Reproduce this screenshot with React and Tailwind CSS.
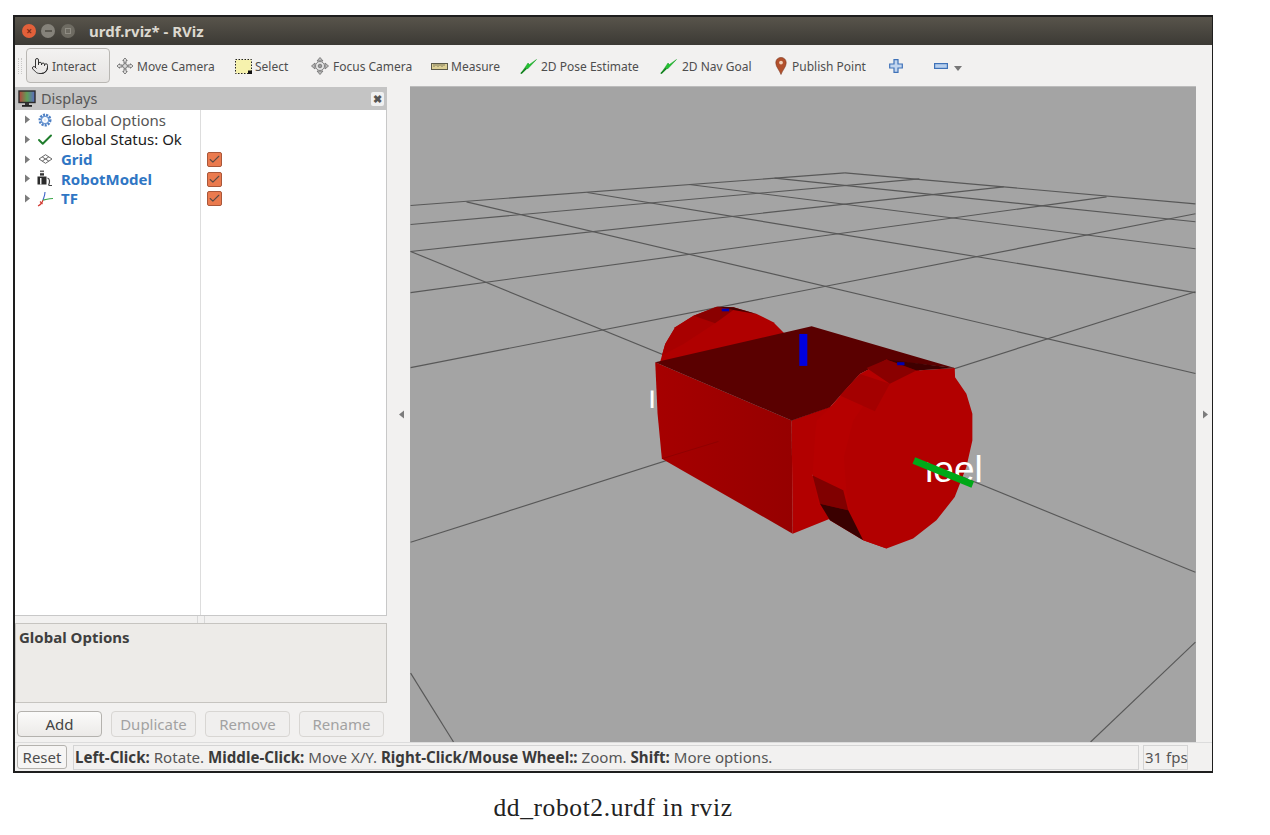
import React from "react";
import { Pointer, Check } from "lucide-react";

const sans = "font-['Noto_Sans',sans-serif]";

const Tri = ({ dir = "right", className = "" }) => (
  <svg width="7" height="9" viewBox="0 0 7 9" className={className}>
    <path d={dir === "right" ? "M1 0.5L6 4.5L1 8.5Z" : "M6 0.5L1 4.5L6 8.5Z"} fill="#7c7c7c" />
  </svg>
);

const MoveIcon = () => (
  <svg width="18" height="18" viewBox="0 0 18 18" fill="none" stroke="#6a6a6a" strokeWidth="0.9">
    <path d="M9 1L6.8 3.6H8V6H10V3.6H11.2Z" />
    <path d="M9 17L6.8 14.4H8V12H10V14.4H11.2Z" />
    <path d="M1 9L3.6 6.8V8H6V10H3.6V11.2Z" />
    <path d="M17 9L14.4 6.8V8H12V10H14.4V11.2Z" />
    <circle cx="9" cy="9" r="2.4" fill="#d8d8d8" />
  </svg>
);

const SelectIcon = () => (
  <svg width="17" height="15" viewBox="0 0 17 15">
    <rect x="0.5" y="0.5" width="16" height="14" fill="#f6f2ad" stroke="#222" strokeDasharray="1.5 1.5" />
    <rect x="13" y="11.5" width="4" height="3.5" fill="#111" />
  </svg>
);

const FocusIcon = () => (
  <svg width="18" height="18" viewBox="0 0 18 18" fill="none" stroke="#777" strokeWidth="0.9">
    <path d="M9 0.5L12 4H6Z" fill="#bbb" />
    <path d="M9 17.5L12 14H6Z" fill="#bbb" />
    <path d="M0.5 9L4 6V12Z" fill="#bbb" />
    <path d="M17.5 9L14 6V12Z" fill="#bbb" />
    <circle cx="9" cy="9" r="4.5" fill="#e4e4e4" />
    <circle cx="9" cy="9" r="1.8" fill="#999" />
  </svg>
);

const RulerIcon = () => (
  <svg width="17" height="7" viewBox="0 0 17 7">
    <rect x="0.5" y="0.5" width="16" height="6" fill="#dccf94" stroke="#5c5a48" />
    <path d="M3 1V4M5 1V3M7 1V4M9 1V3M11 1V4M13 1V3" stroke="#5c5a48" strokeWidth="0.7" />
  </svg>
);

const ArrowIcon = () => (
  <svg width="17" height="15" viewBox="0 0 17 15">
    <path d="M1 14.5L6 8.5L7.5 10L16.5 0.5L9.5 5.5L8 4Z" fill="#21c42f" stroke="#1b9a28" strokeWidth="0.5" />
    <path d="M1 14.5L6.5 9.2" stroke="#12801e" strokeWidth="1.6" />
  </svg>
);

const PinIcon = () => (
  <svg width="12" height="18" viewBox="0 0 12 18">
    <path d="M6 0.5C2.8 0.5 0.8 2.8 0.8 5.8C0.8 9.8 4.6 13.5 6 17.5C7.4 13.5 11.2 9.8 11.2 5.8C11.2 2.8 9.2 0.5 6 0.5Z" fill="#b2502c" stroke="#7d3a22" strokeWidth="0.6" />
    <circle cx="6" cy="5.6" r="1.9" fill="#f0d0b8" />
  </svg>
);

const PlusIcon = () => (
  <svg width="14" height="14" viewBox="0 0 14 14">
    <path d="M5 0.7H9V5H13.3V9H9V13.3H5V9H0.7V5H5Z" fill="#c3d6ef" stroke="#3f72b8" strokeWidth="1.2" />
  </svg>
);

const MinusIcon = () => (
  <svg width="14" height="6" viewBox="0 0 14 6">
    <rect x="0.6" y="0.6" width="12.8" height="4.8" fill="#b8d0ee" stroke="#3f72b8" strokeWidth="1.2" />
  </svg>
);

const MonitorIcon = () => (
  <svg width="18" height="18" viewBox="0 0 18 18">
    <defs>
      <linearGradient id="scr" x1="0" x2="1" y1="0" y2="0">
        <stop offset="0" stopColor="#b8403c" />
        <stop offset="0.5" stopColor="#5f9f58" />
        <stop offset="1" stopColor="#5b6ac4" />
      </linearGradient>
    </defs>
    <rect x="1" y="1" width="16" height="11.5" fill="url(#scr)" stroke="#2b2b2b" strokeWidth="1.4" />
    <rect x="7" y="13" width="4" height="2" fill="#333" />
    <rect x="4" y="15" width="10" height="1.8" fill="#222" />
  </svg>
);

const GearIcon = () => (
  <svg width="14" height="14" viewBox="0 0 14 14">
    <circle cx="7" cy="7" r="5" fill="none" stroke="#4e80c4" strokeWidth="3" strokeDasharray="2 1" />
    <circle cx="7" cy="7" r="3.6" fill="none" stroke="#6f9ad4" strokeWidth="1.2" />
    <circle cx="7" cy="7" r="1.4" fill="#dfe9f6" />
  </svg>
);

const GridIcon = () => (
  <svg width="15" height="10" viewBox="0 0 15 10" fill="none" stroke="#666" strokeWidth="1">
    <path d="M7.5 0.7L14 5L7.5 9.3L1 5Z" />
    <path d="M4.2 2.9L10.8 7.1M10.8 2.9L4.2 7.1" />
  </svg>
);

const RobotIcon = () => (
  <svg width="16" height="17" viewBox="0 0 16 17">
    <rect x="3" y="0.5" width="4" height="1.6" fill="#666" />
    <rect x="3" y="3.2" width="4" height="2.4" fill="#333" />
    <rect x="0.5" y="6.5" width="9" height="8" fill="#2b2b2b" />
    <rect x="3" y="8" width="1.5" height="6.5" fill="#eee" />
    <path d="M10.5 8C13 9 13 12 11.5 15.5M12 15.5H15" stroke="#444" strokeWidth="1.2" fill="none" />
  </svg>
);

const TfIcon = () => (
  <svg width="17" height="16" viewBox="0 0 17 16" fill="none" strokeWidth="1.1">
    <path d="M6 9C5.5 11 4 13.5 1 15" stroke="#d23a32" />
    <path d="M6 9C7 6 8 4 8 1" stroke="#3d63c8" />
    <path d="M6 9C8 9 11 7.5 16 7.5" stroke="#3aa648" />
    <path d="M3 10.5L5.5 13" stroke="#d23a32" />
  </svg>
);

const CheckBox = () => (
  <div className="w-[15px] h-[15px] bg-[#ea7a4e] border border-[#a9573a] rounded-[2px] flex items-center justify-center">
    <Check size={13} strokeWidth={2} color="#5a4a44" />
  </div>
);

const rows = [
  { label: "Global Options", icon: <GearIcon />, cls: "text-[#555555]" },
  { label: "Global Status: Ok", icon: <Check size={18} strokeWidth={2.6} color="#1f7d2c" />, cls: "text-[#1c1c1c]" },
  { label: "Grid", icon: <GridIcon />, cls: "text-[#2f76c4] font-bold", box: true },
  { label: "RobotModel", icon: <RobotIcon />, cls: "text-[#2f76c4] font-bold", box: true },
  { label: "TF", icon: <TfIcon />, cls: "text-[#2f76c4] font-bold", box: true },
];

const tools = [
  { label: "Move Camera", icon: <MoveIcon />, w: "w-[119px]", gap: "gap-[3px]" },
  { label: "Select", icon: <SelectIcon />, w: "w-[76px]", gap: "gap-[3px]" },
  { label: "Focus Camera", icon: <FocusIcon />, w: "w-[120px]", gap: "gap-[4px]" },
  { label: "Measure", icon: <RulerIcon />, w: "w-[89px]", gap: "gap-[3px]" },
  { label: "2D Pose Estimate", icon: <ArrowIcon />, w: "w-[140px]", gap: "gap-[4px]" },
  { label: "2D Nav Goal", icon: <ArrowIcon />, w: "w-[115px]", gap: "gap-[5px]" },
  { label: "Publish Point", icon: <PinIcon />, w: "w-[114px]", gap: "gap-[5px]" },
];

const gridLines = [
  [410, 204.7, 845, 172],
  [845, 172, 1196, 203],
  [774.5, 177.3, 1196, 221],
  [689, 183.7, 1196, 248],
  [587, 191.7, 1196, 292],
  [466, 201, 1196, 373],
  [410, 250.7, 1196, 572],
  [410, 673, 453, 742],
  [410, 223.7, 919.5, 178],
  [410, 250.7, 1004, 186],
  [410, 292, 1107, 196],
  [410, 367, 1196, 213],
  [410, 542, 1196, 291],
  [1091, 742, 1196, 642],
];

const Scene = () => (
  <svg className="w-full h-full block" viewBox="410 86 786 656">
    <defs>
      <linearGradient id="faceL" x1="0" x2="1" y1="0" y2="0">
        <stop offset="0" stopColor="#a60000" />
        <stop offset="1" stopColor="#960000" />
      </linearGradient>
      <clipPath id="eel">
        <rect x="923" y="440" width="70" height="60" />
      </clipPath>
      <clipPath id="lft">
        <rect x="640" y="390" width="30" height="18" />
      </clipPath>
    </defs>
    {gridLines.map((l, i) => (
      <line key={i} x1={l[0]} y1={l[1]} x2={l[2]} y2={l[3]} stroke="#585858" strokeWidth="1.15" />
    ))}
    <text x="648.5" y="407" fontSize="30" fill="#ffffff" clipPath="url(#lft)" fontFamily="'Liberation Sans',sans-serif">l</text>
    <g transform="translate(620 280) scale(0.3333)">
      {/* back wheel */}
      <polygon points="118,250 135,190 165,140 220,105 290,78 340,80 410,100 460,125 495,160 300,230" fill="#b00000" />
      <polygon points="135,190 165,140 220,105 285,128 190,190 125,225" fill="#a80000" />
      <polygon points="220,105 290,78 340,88 285,128" fill="#8a0000" />
      <polygon points="290,78 340,80 410,100 340,88" fill="#4a0000" />
      <rect x="305" y="84" width="22" height="8" fill="#0000b0" />
      {/* box */}
      <polygon points="105,245 515,420 518,760 125,535 112,400" fill="url(#faceL)" />
      <polygon points="515,420 640,375 600,500 578,585 630,715 518,760" fill="#b20000" />
      <line x1="125" y1="535" x2="295" y2="483" stroke="#860000" strokeWidth="2" />
      <polygon points="105,245 575,137 1005,262 800,240 720,280 630,380 515,420" fill="#5a0000" />
      {/* front wheel side */}
      <polygon points="630,380 720,280 800,237 900,262 800,805 730,780 630,720 595,670 578,585 585,470 590,420" fill="#b60000" />
      {/* front wheel disc */}
      <polygon points="890,270 1005,262 1006,290 1040,340 1058,400 1058,480 1040,560 1005,650 950,720 880,775 800,805 730,780 695,720 680,640 672,530 700,420 770,320" fill="#b20000" />
      {/* upper facets */}
      <polygon points="720,280 810,310 765,392 660,345" fill="#a40000" />
      <polygon points="740,262 800,237 890,270 810,310" fill="#8a0000" />
      <polygon points="800,237 1005,262 890,270" fill="#3f0000" />
      <rect x="832" y="245" width="22" height="9" fill="#0000b0" />
      {/* lower facets */}
      <polygon points="578,585 670,630 685,690 600,670" fill="#800000" />
      <polygon points="600,670 685,690 730,780 630,720" fill="#3a0000" />
      {/* blue axis */}
      <rect x="538" y="160" width="24" height="96" fill="#0000e0" />
    </g>
    <text x="913" y="482" fontSize="37" fill="#ffffff" clipPath="url(#eel)" fontFamily="'Liberation Sans',sans-serif">heel</text>
    <line x1="914" y1="460" x2="973" y2="484" stroke="#00a818" strokeWidth="7" />
  </svg>
);

export default function App() {
  return (
    <div className={`w-[1270px] h-[835px] bg-white pt-[15px] pl-[13px] overflow-hidden ${sans}`}>
      <div className="w-[1200px] h-[758px] border-2 border-r border-[#1e1e1e] flex flex-col bg-[#f2f1f0]">
        {/* title bar */}
        <div className="h-[28px] shrink-0 bg-linear-to-b from-[#58544b] to-[#3c3a35] flex items-center pl-[7px]">
          <div className="w-[14px] h-[14px] rounded-full bg-[#e2603a] flex items-center justify-center text-[10px] leading-none text-[#7a2a14] font-bold">×</div>
          <div className="w-[14px] h-[14px] rounded-full bg-[#85827a] ml-[5px] flex items-center justify-center">
            <div className="w-[7px] h-[2px] bg-[#5a574f]" />
          </div>
          <div className="w-[14px] h-[14px] rounded-full bg-[#6e6b62] ml-[6px] flex items-center justify-center">
            <div className="w-[6px] h-[6px] border border-[#8f8c83]" />
          </div>
          <span className="ml-[14px] text-[15px] font-bold text-[#dcd8cf] whitespace-pre">urdf.rviz* - RViz</span>
        </div>

        {/* toolbar */}
        <div className="h-[41px] shrink-0 flex items-center pl-[3px] text-[12px] text-[#4e4e4e]">
          <div className="w-[4px] h-[16px] mr-[4px] border-x border-dotted border-[#c9c8c6]" />
          <div className="h-[35px] w-[84px] rounded-[4px] border border-[#b9b7b3] bg-linear-to-b from-[#f3f2f1] to-[#e6e4e2] flex items-center pl-[4px] gap-[3px] mr-[6px]">
            <Pointer size={18} strokeWidth={1.2} color="#222" className="mt-[1px]" />
            <span className="mt-[3px]">Interact</span>
          </div>
          {tools.map((t) => (
            <div key={t.label} className={`${t.w} ${t.gap} shrink-0 flex items-center whitespace-nowrap pt-[1px]`}>
              {t.icon}
              <span className="mt-[1px]">{t.label}</span>
            </div>
          ))}
          <div className="w-[45px] shrink-0 flex items-center pt-[1px]"><PlusIcon /></div>
          <div className="flex items-center pt-[1px]">
            <MinusIcon />
            <svg width="8" height="5" viewBox="0 0 8 5" className="ml-[6px] mt-[4px]"><path d="M0 0H8L4 5Z" fill="#777" /></svg>
          </div>
        </div>

        {/* main */}
        <div className="h-[656px] shrink-0 flex">
          <div className="w-[372px] shrink-0 flex flex-col pt-px">
            <div className="h-[23px] shrink-0 bg-[#c4c4c4] flex items-center pl-[3px] pr-[3px]">
              <MonitorIcon />
              <span className="ml-[5px] text-[14.5px] text-[#565656]">Displays</span>
              <div className="ml-auto w-[13px] h-[14px] rounded-[2px] bg-[#f0f0f0] flex items-center justify-center text-[11px] leading-none font-bold text-[#555]">✖</div>
            </div>
            <div className="h-[506px] shrink-0 bg-white border-b border-r border-[#c8c8c8] relative flex">
              <div className="w-[186px] shrink-0 h-full border-r border-[#dddddd]">
                {rows.map((r) => (
                  <div key={r.label} className="h-[19.7px] flex items-center">
                    <Tri className="ml-[9px]" />
                    <div className="w-[18px] ml-[5px] flex justify-center shrink-0">{r.icon}</div>
                    <span className={`ml-[7px] text-[15px] whitespace-nowrap ${r.cls}`}>{r.label}</span>
                  </div>
                ))}
              </div>
              <div className="pl-[6px] pt-[42px] flex flex-col gap-[4.7px]">
                <CheckBox />
                <CheckBox />
                <CheckBox />
              </div>
            </div>
            <div className="h-[7px] shrink-0 flex justify-center">
              <div className="w-[8px] h-full border-x border-[#d8d8d8]" />
            </div>
            <div className="h-[80px] shrink-0 bg-[#edebe8] border border-[#c6c4c0] pl-[3px] pt-[2px] text-[15px] font-bold text-[#3f3f3f]">Global Options</div>
            <div className="mt-[8px] h-[26px] shrink-0 flex gap-[9px] pl-[2px] text-[15px]">
              <div className="w-[85px] rounded-[4px] border border-[#b4b2ae] bg-linear-to-b from-[#fbfbfa] to-[#eceae8] flex items-center justify-center text-[#444]">Add</div>
              <div className="w-[85px] rounded-[4px] border border-[#d8d6d3] bg-[#f0efee] flex items-center justify-center text-[#a2a2a2]">Duplicate</div>
              <div className="w-[85px] rounded-[4px] border border-[#d8d6d3] bg-[#f0efee] flex items-center justify-center text-[#a2a2a2]">Remove</div>
              <div className="w-[85px] rounded-[4px] border border-[#d8d6d3] bg-[#f0efee] flex items-center justify-center text-[#a2a2a2]">Rename</div>
            </div>
          </div>
          <div className="w-[23px] shrink-0 flex items-center justify-end pr-[5px]"><Tri dir="left" /></div>
          <div className="w-[786px] shrink-0 h-full bg-[#a4a4a4] border-t border-[#bcbcbc]">
            <Scene />
          </div>
          <div className="flex-1 flex items-center pl-[6px]"><Tri /></div>
        </div>

        {/* status bar */}
        <div className="h-[29px] shrink-0 flex items-center border-t border-[#dcdcdc] pl-[2px]">
          <div className="w-[50px] h-[24px] rounded-[3px] border border-[#b4b2ae] bg-[#f6f5f4] flex items-center justify-center text-[15px] text-[#4c4c4c]">Reset</div>
          <div className="ml-[6px] w-[1066px] h-[25px] border border-[#d4d4d4] flex items-center pl-[1px] text-[15.1px] text-[#565656] whitespace-nowrap">
            <span><b className="text-[#3a3a3a]">Left-Click:</b> Rotate. <b className="text-[#3a3a3a]">Middle-Click:</b> Move X/Y. <b className="text-[#3a3a3a]">Right-Click/Mouse Wheel::</b> Zoom. <b className="text-[#3a3a3a]">Shift:</b> More options.</span>
          </div>
          <div className="ml-[4px] w-[45px] h-[25px] border border-[#d4d4d4] flex items-center pl-[1px] text-[15px] text-[#565656] whitespace-nowrap">31 fps</div>
        </div>
      </div>
      <div className="w-[1200px] mt-[22px] text-center text-[25.5px] tracking-[0.6px] leading-[26px] text-[#222] font-['Liberation_Serif',serif]">dd_robot2.urdf in rviz</div>
    </div>
  );
}
